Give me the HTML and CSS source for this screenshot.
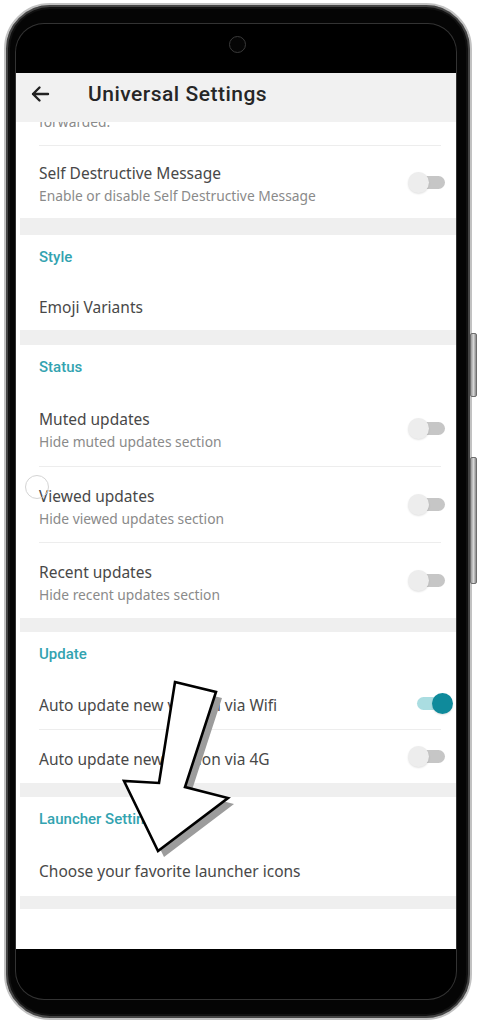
FILE: index.html
```html
<!DOCTYPE html>
<html>
<head>
<meta charset="utf-8">
<link rel="stylesheet" href="styles.css">
</head>
<body>
<div class="page">
  <div class="phone">
    <div class="display">
      <div class="top-bezel"><span class="camera"></span></div>
      <div class="screen">
        <header class="appbar">
          <svg class="back" width="20" height="20" viewBox="0 0 20 20"><path d="M18 10H3M9.5 3.5L3 10l6.5 6.5" fill="none" stroke="#222" stroke-width="2.4" stroke-linecap="round" stroke-linejoin="round"/></svg>
          <h1 class="title">Universal Settings</h1>
        </header>
        <div class="list">
          <div class="clip"><span class="sub">forwarded.</span></div>
          <div class="divider"></div>
          <div class="row h72">
            <div class="text"><div class="label">Self Destructive Message</div><div class="sub">Enable or disable Self Destructive Message</div></div>
            <span class="toggle"><span class="track"></span><span class="thumb"></span></span>
          </div>
          <div class="band b17"></div>
          <div class="section">Style</div>
          <div class="row h50"><div class="text"><div class="label">Emoji Variants</div></div></div>
          <div class="band b15"></div>
          <div class="section">Status</div>
          <div class="row h76">
            <div class="text"><div class="label">Muted updates</div><div class="sub">Hide muted updates section</div></div>
            <span class="toggle"><span class="track"></span><span class="thumb"></span></span>
          </div>
          <div class="divider"></div>
          <div class="row h75">
            <div class="text"><div class="label">Viewed updates</div><div class="sub">Hide viewed updates section</div></div>
            <span class="toggle"><span class="track"></span><span class="thumb"></span></span>
          </div>
          <div class="divider"></div>
          <div class="row h75">
            <div class="text"><div class="label">Recent updates</div><div class="sub">Hide recent updates section</div></div>
            <span class="toggle"><span class="track"></span><span class="thumb"></span></span>
          </div>
          <div class="band b14"></div>
          <div class="section">Update</div>
          <div class="row h52">
            <div class="text"><div class="label">Auto update new version via Wifi</div></div>
            <span class="toggle on"><span class="track"></span><span class="thumb"></span></span>
          </div>
          <div class="divider"></div>
          <div class="row h53">
            <div class="text"><div class="label">Auto update new version via 4G</div></div>
            <span class="toggle"><span class="track"></span><span class="thumb"></span></span>
          </div>
          <div class="band b14"></div>
          <div class="section">Launcher Settings</div>
          <div class="row h54"><div class="text"><div class="label">Choose your favorite launcher icons</div></div></div>
          <div class="band b13"></div>
        </div>
      </div>
      <div class="bottom-bezel"></div>
    </div>
  </div>
  <span class="btn btn1"></span>
  <span class="btn btn2"></span>
  <span class="touch"></span>
  <svg class="pointer" width="125" height="190" viewBox="0 0 125 190">
    <polygon points="63,12 104,22 73,117 116,128 46,181 12,111 47,113" fill="#9c9c9c"/>
    <polygon points="57,6 98,16 67,111 110,122 40,175 6,105 41,107" fill="#fff" stroke="#000" stroke-width="2.6" stroke-linejoin="miter"/>
  </svg>
</div>
</body>
</html>
```

FILE: styles.css
```css
html, body {
  margin: 0;
  padding: 0;
  background: #fff;
}
body {
  font-family: Roboto, "Noto Sans", "Liberation Sans", sans-serif;
}
.page {
  position: relative;
  width: 477px;
  height: 1024px;
  overflow: hidden;
  box-sizing: border-box;
  padding: 3px 0 0 4px;
}
.phone {
  box-sizing: border-box;
  width: 468px;
  height: 1017px;
  border-radius: 46px;
  background: #050505;
  border: 2px solid #c2c2c2;
  box-shadow: inset 0 0 0 2px #454545, inset 0 0 0 4px #111;
  padding: 19px 14px 19px 10px;
}
.display {
  height: 975px;
  border-radius: 28px;
  box-shadow: 0 0 0 1px #333;
  background: #000;
  display: flex;
  flex-direction: column;
  overflow: hidden;
}
.top-bezel {
  height: 49px;
  flex: none;
  display: flex;
  justify-content: center;
  align-items: flex-start;
  padding-top: 12px;
  box-sizing: border-box;
}
.camera {
  width: 15px;
  height: 15px;
  margin-left: 2px;
  border-radius: 50%;
  border: 1px solid #3a3a3a;
  background: #050505;
}
.bottom-bezel {
  flex: 1;
}
.screen {
  height: 876px;
  flex: none;
  background: #fff;
  display: flex;
  flex-direction: column;
  overflow: hidden;
}
.appbar {
  height: 49px;
  flex: none;
  box-sizing: border-box;
  background: #f1f1f1;
  display: flex;
  align-items: center;
  padding: 0 0 7px 14px;
}
.back {
  flex: none;
}
.title {
  margin: 0 0 0 38px;
  font-size: 21px;
  font-weight: 500;
  letter-spacing: 0.5px;
  color: #262626;
  line-height: 24px;
}
.list {
  flex: 1;
  overflow: hidden;
  display: flex;
  flex-direction: column;
}
.clip {
  height: 23px;
  flex: none;
  overflow: hidden;
  padding: 0 0 0 23px;
}
.divider {
  height: 1px;
  flex: none;
  background: #ededed;
  margin: 0 15px 0 23px;
}
.row {
  flex: none;
  display: flex;
  align-items: center;
  box-sizing: border-box;
  padding: 0 3px 0 23px;
}
.h50 { height: 50px; }
.h52 { height: 52px; }
.h53 { height: 53px; }
.h54 { height: 54px; }
.h72 { height: 72px; }
.h75 { height: 75px; }
.h76 { height: 76px; }
.text {
  flex: 1;
  margin-top: 4px;
}
.label {
  font-family: "Noto Sans", Roboto, sans-serif;
  font-size: 15.5px;
  line-height: 20px;
  color: #484848;
}
.sub {
  font-family: "Noto Sans", Roboto, sans-serif;
  font-size: 13.8px;
  line-height: 18px;
  color: #8a8a8a;
  margin-top: 4px;
}
.clip .sub {
  display: block;
  margin-top: -9px;
}
.section {
  flex: none;
  height: 45px;
  box-sizing: border-box;
  padding: 12px 0 0 23px;
  font-size: 15px;
  line-height: 20px;
  font-weight: 500;
  color: #33a3b0;
}
.band {
  flex: none;
  margin-left: 4px;
  background: #efefef;
}
.b13 { height: 13px; }
.b14 { height: 14px; }
.b15 { height: 15px; }
.b17 { height: 17px; }
.toggle {
  flex: none;
  position: relative;
  width: 45px;
  height: 21px;
}
.track {
  position: absolute;
  top: 4px;
  left: 4px;
  right: 8px;
  height: 13px;
  border-radius: 7px;
  background: #c6c6c6;
}
.thumb {
  position: absolute;
  top: 0;
  left: 0;
  width: 21px;
  height: 21px;
  border-radius: 50%;
  background: #ededed;
  box-shadow: 0 1px 2px rgba(0, 0, 0, 0.12);
}
.toggle.on .track {
  left: 9px;
  right: 3px;
  background: #aadde1;
}
.toggle.on .thumb {
  left: 24px;
  background: #0f8a9b;
}
.btn {
  position: absolute;
  left: 470px;
  width: 5px;
  border: 1px solid #6e6e6e;
  border-radius: 2px;
  background: linear-gradient(90deg, #9a9a9a, #d6d6d6, #8a8a8a);
}
.btn1 {
  top: 333px;
  height: 62px;
}
.btn2 {
  top: 457px;
  height: 125px;
}
.touch {
  position: absolute;
  left: 25px;
  top: 475px;
  width: 22px;
  height: 22px;
  border-radius: 50%;
  border: 1px solid #d4d4d4;
}
.pointer {
  position: absolute;
  left: 118px;
  top: 676px;
}
```
